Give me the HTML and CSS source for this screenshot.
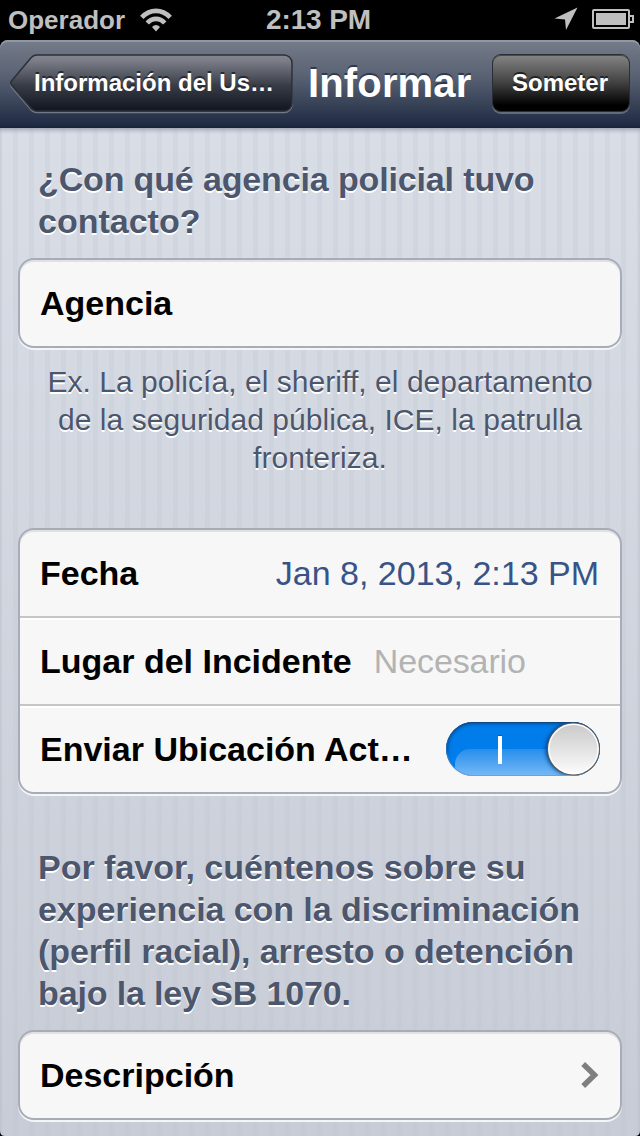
FILE: index.html
```html
<!DOCTYPE html>
<html lang="es">
<head>
<meta charset="utf-8">
<title>Informar</title>
<link rel="stylesheet" href="styles.css">
</head>
<body>
<div class="phone">
  <header class="status">
    <div class="status-left">
      <span class="carrier">Operador</span>
      <svg class="wifi" width="32" height="24" viewBox="0 0 32 24">
        <g fill="none" stroke="#bfbfbf" stroke-width="4.6">
          <path d="M1.800 9.400Q8 2.900 16 2.900T30.200 9.400"/>
          <path d="M7.200 15Q11 10.900 16 10.900T24.800 15"/>
        </g>
        <path d="M12 19Q16 14.800 20 19L16 23.400Z" fill="#bfbfbf"/>
      </svg>
    </div>
    <span class="time">2:13 PM</span>
    <div class="status-right">
      <svg class="location" width="24" height="24" viewBox="0 0 24 24"><path d="M23.500 0.500L12 23L11 12.500L0.500 11.500Z" fill="#bfbfbf"/></svg>
      <svg class="battery" width="42" height="20" viewBox="0 0 42 20">
        <rect x="1" y="1" width="36" height="18" rx="1" fill="none" stroke="#bfbfbf" stroke-width="2"/>
        <rect x="4" y="4" width="30" height="12" fill="#bfbfbf"/>
        <path d="M38 7h3v6h-3" fill="none" stroke="#bfbfbf" stroke-width="2"/>
      </svg>
    </div>
  </header>
  <nav class="navbar">
    <div class="back">
      <svg class="back-shape" width="284" height="60" viewBox="0 0 284 60">
        <defs><linearGradient id="backFill" x1="0" y1="0" x2="0" y2="1">
          <stop offset="0" stop-color="#84868d"/><stop offset=".1" stop-color="#7b7e87"/><stop offset=".5" stop-color="#3f434e"/><stop offset=".52" stop-color="#3a3e49"/><stop offset="1" stop-color="#101520"/>
        </linearGradient></defs>
        <path d="M27 2.500H274a8 8 0 0 1 8 8V50.500a8 8 0 0 1-8 8H27q-4 0-7-4L1.500 33q-1.500-2 0-4L20 6.500q3-4 7-4Z" fill="none" stroke="#717987" stroke-width="1.500"/>
        <path d="M27 1H274a8 8 0 0 1 8 8V49a8 8 0 0 1-8 8H27q-4 0-7-4L1.500 31q-1.500-2 0-4L20 5q3-4 7-4Z" fill="url(#backFill)" stroke="#2b2f39" stroke-width="1.500"/>
      </svg>
      <span class="back-label">Información del Us…</span>
    </div>
    <h1 class="title">Informar</h1>
    <button class="submit"><span>Someter</span></button>
  </nav>
  <main class="form">
    <h2 class="heading heading-agency"><span class="tight">¿Con qué agencia policial tuvo</span><br>contacto?</h2>
    <section class="group"><div class="row"><span class="label">Agencia</span></div></section>
    <p class="hint">Ex. La policía, el sheriff, el departamento<br>de la seguridad pública, ICE, la patrulla<br>fronteriza.</p>
    <section class="group">
      <div class="row"><span class="label">Fecha</span><span class="value">Jan 8, 2013, 2:13 PM</span></div>
      <div class="row"><span class="label">Lugar del Incidente</span><span class="placeholder">Necesario</span></div>
      <div class="row"><span class="label">Enviar Ubicación Act…</span>
        <svg class="switch" width="154" height="54" viewBox="1 1 154 54">
          <defs>
            <clipPath id="pill"><rect x="1" y="1" width="154" height="54" rx="27"/></clipPath>
            <linearGradient id="gloss" x1="0" y1="28" x2="0" y2="55" gradientUnits="userSpaceOnUse"><stop offset="0" stop-color="#268eeb"/><stop offset="1" stop-color="#76b9f6"/></linearGradient>
            <linearGradient id="knob" x1="0" y1="0" x2="0" y2="1"><stop offset="0" stop-color="#cacaca"/><stop offset="1" stop-color="#fbfbfb"/></linearGradient>
            <linearGradient id="rim" x1="0" y1="0" x2="0" y2="1"><stop offset="0" stop-color="#0f4580"/><stop offset=".5" stop-color="#226fb7"/><stop offset="1" stop-color="#7b9fc4"/></linearGradient>
            <filter id="soft" x="-20%" y="-20%" width="140%" height="140%"><feGaussianBlur stdDeviation="2"/></filter>
          </defs>
          <g clip-path="url(#pill)">
            <rect width="156" height="56" fill="#007dea"/>
            <rect x="10" y="28" width="150" height="48" rx="15" fill="url(#gloss)"/>
            <path d="M0 34V28A28 28 0 0 1 28 0H156" fill="none" stroke="#003574" stroke-width="4" filter="url(#soft)"/>
            <circle cx="127.500" cy="28" r="26.500" fill="#003a7c" filter="url(#soft)"/>
          </g>
          <rect x="1.500" y="1.500" width="153" height="53" rx="26.500" fill="none" stroke="url(#rim)" stroke-width="1"/>
          <path d="M53 15h4v28h-4z" fill="#fff"/><path d="M53 14h4v1h-4z" fill="#075cae"/>
          <circle cx="128.500" cy="28" r="26.500" fill="#5c5c5c"/>
          <circle cx="128.500" cy="28" r="24.700" fill="url(#knob)" stroke="#fff" stroke-width="1.500"/>
        </svg>
      </div>
    </section>
    <h2 class="heading heading-story">Por favor, cuéntenos sobre su<br><span class="slim">experiencia con la discriminación</span><br><span class="slim">(perfil racial), arresto o detención</span><br><span class="tight">bajo la ley SB 1070.</span></h2>
    <section class="group"><div class="row"><span class="label">Descripción</span>
      <svg class="chevron" width="18" height="26" viewBox="0 0 18 26"><path d="M2.200 2L13.500 13L2.200 24" fill="none" stroke="#7f7f7f" stroke-width="5.500"/></svg>
    </div></section>
  </main>
  <svg class="corner corner-left" width="5" height="5" viewBox="0 0 5 5"><path d="M0 0Q0 5 5 5H0Z"/></svg>
  <svg class="corner corner-right" width="5" height="5" viewBox="0 0 5 5"><path d="M5 0Q5 5 0 5H5Z"/></svg>
</div>
</body>
</html>
```
FILE: styles.css
```css
* { box-sizing: border-box; }
body { margin: 0; background: #000; font-family: "Liberation Sans", Arial, sans-serif; }
.phone { position: relative; width: 640px; height: 1136px; overflow: hidden; display: flex; flex-direction: column; }
.status { height: 40px; flex: none; display: grid; grid-template-columns: 1fr auto 1fr; align-items: center; padding: 0 6px 0 8px; color: #bfbfbf; font-weight: bold; font-size: 28px; line-height: 40px; }
.status-left, .status-right { display: flex; align-items: center; }
.status-left { gap: 15px; }
.status-right { justify-content: flex-end; gap: 14px; padding-bottom: 2px; }
.carrier { font-size: 26px; }
.time { margin-right: 5px; letter-spacing: -0.1px; }
.navbar { height: 88px; flex: none; display: flex; align-items: flex-start; padding: 14px 10px 0; border-radius: 8px 8px 0 0; border-bottom: 2px solid #1b253a; background: linear-gradient(#757c8a, #596273 42%, #1e2a43); box-shadow: inset 0 2px #9198a4; color: #fff; }
.back { display: grid; width: 284px; height: 60px; }
.back-shape, .back-label { grid-area: 1 / 1; }
.back-label { padding-left: 24px; font-size: 24px; font-weight: bold; line-height: 58px; text-shadow: 0 -2px #252a35; white-space: nowrap; }
.title { margin: 0 0 0 14px; width: 184px; font-size: 40px; line-height: 58px; letter-spacing: 0.15px; text-shadow: 0 -2px #30394b; white-space: nowrap; }
.submit { width: 138px; height: 58px; padding: 0 2px 0 0; border: 1px solid #2c2e35; border-radius: 9px; background: linear-gradient(#858585, #404040 50%, #000 90%); box-shadow: inset 0 1px #4a4a4a, 0 2px #636c7c; color: #fff; font: bold 24px "Liberation Sans", Arial, sans-serif; text-shadow: 0 -2px #222; }
.form { flex: 1; padding: 30px 18px 0; background: repeating-linear-gradient(90deg, rgba(182,190,207,.18) 0 2px, transparent 2px 13px, rgba(182,190,207,.18) 13px 16px), linear-gradient(#d8dde6, #c8ccd6); box-shadow: inset 0 4px 4px -2px #9ba1ac; }
.heading { margin: 0; padding-left: 20px; font-size: 34px; line-height: 42px; color: #4c566c; text-shadow: 0 2px #fff; white-space: nowrap; }
.tight { letter-spacing: -0.14px; }
.slim { letter-spacing: -0.07px; }
.heading-agency { height: 100px; }
.heading-story { height: 184px; margin-top: 52px; }
.group { width: 604px; border: 2px solid #a7acb6; border-radius: 16px; background: #f7f7f7; box-shadow: inset 0 2px #e1e1e1, 0 2px #f3f5f8; }
.row { height: 88px; display: flex; align-items: center; padding: 0 21px 0 20px; white-space: nowrap; }
.row:first-child { height: 86px; }
.row + .row { border-top: 2px solid #c6c6c6; box-shadow: inset 0 2px #fff; }
.label { font-size: 34px; font-weight: bold; line-height: 40px; color: #000; }
.value { margin-left: auto; font-size: 34px; color: #385487; }
.placeholder { margin-left: 22px; font-size: 34px; letter-spacing: -0.1px; color: #b3b3b3; }
.switch { margin-left: auto; margin-right: -1px; }
.chevron { margin-left: auto; }
.hint { margin: 15px 0 0; height: 165px; text-align: center; font-size: 30px; line-height: 38px; letter-spacing: 0.05px; color: #4c566c; text-shadow: 0 2px #fff; white-space: nowrap; }
.corner { position: absolute; bottom: 0; fill: #000; }
.corner-left { left: 0; }
.corner-right { right: 0; }
```
